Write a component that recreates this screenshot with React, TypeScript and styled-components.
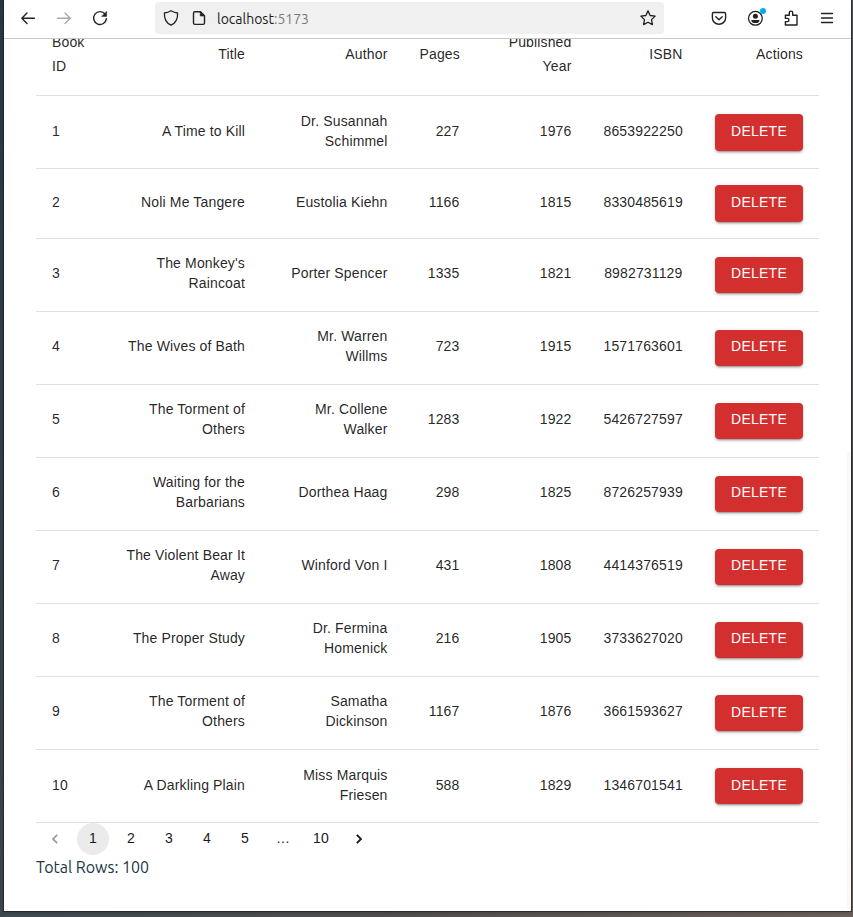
import React from "react";
import styled, { createGlobalStyle } from "styled-components";

const GlobalStyle = createGlobalStyle`
  * { box-sizing: border-box; }
  body { margin: 0; overflow: hidden; }
`;

const sans = `"Liberation Sans", Arial, sans-serif`;
const uiFont = `Ubuntu, "Noto Sans", sans-serif`;

const Desktop = styled.div`
  width: 853px;
  height: 917px;
  padding: 0 2px 6px 4px;
  background:
    linear-gradient(#55575a, #4a4a4a 60%, #6a5f59) right / 3px 100% no-repeat,
    linear-gradient(#263a42, #3b474c) left / 5px 100% no-repeat,
    linear-gradient(90deg, #3f4b50, #504e4e 45%, #6a615b);
`;

const BrowserWindow = styled.div`
  height: 911px;
  display: flex;
  flex-direction: column;
  background: #fff;
  overflow: hidden;
  box-shadow: 0 0 0 1px rgba(25, 28, 30, 0.55), 0 1px 4px rgba(0, 0, 0, 0.3);
`;

const Toolbar = styled.header`
  height: 39px;
  flex: none;
  display: flex;
  align-items: flex-start;
  padding: 2px 16px 0 16px;
  border-bottom: 1px solid #c9c9c9;
  background: #fff;
`;

const ToolbarGroup = styled.div<{ $gap: number; $push?: boolean }>`
  height: 32px;
  display: flex;
  align-items: center;
  gap: ${(p) => p.$gap}px;
  margin-left: ${(p) => (p.$push ? "auto" : "0")};
`;

const IconButton = styled.button<{ $dim?: boolean }>`
  width: 16px;
  height: 16px;
  padding: 0;
  border: 0;
  background: none;
  position: relative;
  color: ${(p) => (p.$dim ? "#a9a9a9" : "#222")};
  svg { display: block; }
`;

const Dot = styled.span`
  position: absolute;
  top: -2px;
  right: -3px;
  width: 6px;
  height: 6px;
  border-radius: 50%;
  background: #00a8ff;
`;

const AddressBar = styled.div`
  width: 509px;
  height: 32px;
  margin-left: 47px;
  padding: 0 8px;
  display: flex;
  align-items: center;
  gap: 12px;
  border-radius: 4px;
  background: #f0f0f0;
  > :last-child { margin-left: auto; }
`;

const Url = styled.span`
  font: 14px/20px ${uiFont};
  letter-spacing: 0;
  color: #1c1c1c;
  margin: 2px 0 0 -2px;
`;

const Port = styled.span`
  color: #7b7b7b;
`;

const Page = styled.main`
  flex: 1;
  min-height: 0;
  overflow: hidden;
  padding: 0 32px;
  background: linear-gradient(#f9f9f9, #f9f9f9) right bottom 2px / 4px 457px no-repeat #fff;
`;

const Table = styled.div`
  margin-top: -24px;
  width: 783px;
  font: 14px/20px ${sans};
  letter-spacing: 0.15px;
  color: rgba(0, 0, 0, 0.87);
`;

const Row = styled.div<{ $height: number; $header?: boolean }>`
  height: ${(p) => p.$height}px;
  display: grid;
  grid-template-columns: 65px 160px 142.5px 72px 112px 111px 120.5px;
  align-items: center;
  border-bottom: 1px solid #e0e0e0;
  line-height: ${(p) => (p.$header ? 24 : 20)}px;
`;

const Cell = styled.div<{ $left?: boolean; $lift: number }>`
  padding: 0 16px ${(p) => p.$lift}px;
  text-align: ${(p) => (p.$left ? "left" : "right")};
`;

const ActionCell = styled.div`
  padding: 0 16px;
  display: flex;
  justify-content: flex-end;
`;

const DeleteButton = styled.button<{ $height: number; $lift: number }>`
  width: 88px;
  height: ${(p) => p.$height}px;
  padding: 0 0 ${(p) => p.$lift}px;
  border: 0;
  border-radius: 4px;
  background: #d32f2f;
  color: #fff;
  font: 14px/24px ${sans};
  letter-spacing: 0.25px;
  box-shadow: 0 3px 1px -2px rgba(0, 0, 0, 0.2), 0 2px 2px rgba(0, 0, 0, 0.14),
    0 1px 5px rgba(0, 0, 0, 0.12);
`;

const Pagination = styled.nav`
  height: 32px;
  display: flex;
  gap: 6px;
  padding-left: 3px;
`;

const PageItem = styled.button<{ $active?: boolean; $dim?: boolean; $icon?: boolean }>`
  width: 32px;
  height: 32px;
  display: flex;
  align-items: center;
  justify-content: center;
  padding: 0 0 ${(p) => (p.$icon ? 0 : 2)}px;
  border: 0;
  border-radius: 50%;
  background: ${(p) => (p.$active ? "#ebebeb" : "transparent")};
  color: ${(p) => (p.$dim ? "#a0a0a0" : "#1a1a1a")};
  font: 14px/20px ${sans};
  letter-spacing: 0.15px;
`;

const Total = styled.div`
  font: 16px/24px ${uiFont};
  color: #213547;
`;

const books: [number, string, string, number, number, string][] = [
  [1, "A Time to Kill", "Dr. Susannah Schimmel", 227, 1976, "8653922250"],
  [2, "Noli Me Tangere", "Eustolia Kiehn", 1166, 1815, "8330485619"],
  [3, "The Monkey's Raincoat", "Porter Spencer", 1335, 1821, "8982731129"],
  [4, "The Wives of Bath", "Mr. Warren Willms", 723, 1915, "1571763601"],
  [5, "The Torment of Others", "Mr. Collene Walker", 1283, 1922, "5426727597"],
  [6, "Waiting for the Barbarians", "Dorthea Haag", 298, 1825, "8726257939"],
  [7, "The Violent Bear It Away", "Winford Von I", 431, 1808, "4414376519"],
  [8, "The Proper Study", "Dr. Fermina Homenick", 216, 1905, "3733627020"],
  [9, "The Torment of Others", "Samatha Dickinson", 1167, 1876, "3661593627"],
  [10, "A Darkling Plain", "Miss Marquis Friesen", 588, 1829, "1346701541"],
];

const columns = ["Book ID", "Title", "Author", "Pages", "Published Year", "ISBN", "Actions"];

function Icon({ children, width = 1.4 }: { children: React.ReactNode; width?: number }) {
  return (
    <svg width="16" height="16" viewBox="0 0 16 16" fill="none" stroke="currentColor"
      strokeWidth={width} strokeLinecap="round" strokeLinejoin="round">
      {children}
    </svg>
  );
}

function Chevron({ flip }: { flip?: boolean }) {
  return (
    <svg width="18" height="18" viewBox="0 0 24 24" fill="currentColor" stroke="currentColor" strokeWidth="0.7">
      <path d={flip
        ? "M10 6L8.59 7.41 13.17 12l-4.58 4.59L10 18l6-6z"
        : "M15.41 7.41L14 6l-6 6 6 6 1.41-1.41L10.83 12z"} />
    </svg>
  );
}

function BrowserToolbar() {
  return (
    <Toolbar>
      <ToolbarGroup $gap={20}>
        <IconButton aria-label="Back">
          <Icon><path d="M14.4 8.300H1.800M7 3.100 1.800 8.300 7 13.500" /></Icon>
        </IconButton>
        <IconButton $dim aria-label="Forward">
          <Icon><path d="M1.600 8.300h12.600M9 3.100 14.200 8.300 9 13.500" /></Icon>
        </IconButton>
        <IconButton aria-label="Reload">
          <Icon>
            <path d="M13.2 4.3A6.4 6.4 0 1 0 14.4 8.6" />
            <path d="M14.6 1.6v4.8H9.8z" fill="currentColor" strokeWidth=".5" />
          </Icon>
        </IconButton>
      </ToolbarGroup>
      <AddressBar>
        <IconButton aria-label="Protection">
          <Icon width={1.3}><path d="M8 .8Q11 2.700 14.600 3c.3 5.500-1.800 10-6.600 12.200C3.200 13 1.100 8.500 1.400 3Q5 2.700 8 .8z" /></Icon>
        </IconButton>
        <IconButton aria-label="Site information">
          <Icon width={1.4}>
            <path d="M9.5 1.700H4Q2.500 1.700 2.500 3.200V13Q2.500 14.400 4 14.400H12Q13.500 14.400 13.500 13V5.700z" />
            <path d="M9.300 1.700v4.200h4.200z" fill="currentColor" strokeWidth=".8" />
          </Icon>
        </IconButton>
        <Url>localhost<Port>:5173</Port></Url>
        <IconButton aria-label="Bookmark">
          <Icon width={1.3}><path d="m8 .9 2.150 4.600 5 .65-3.650 3.500.9 5L8 12.200l-4.400 2.450.9-5L.850 6.150l5-.65z" /></Icon>
        </IconButton>
      </AddressBar>
      <ToolbarGroup $gap={20} $push>
        <IconButton aria-label="Pocket">
          <Icon><path d="M2.700 2.500h10.600q1.300 0 1.300 1.300V8a6.600 6.200 0 0 1-13.200 0V3.800q0-1.300 1.300-1.300zM4.800 6.800 8 9.800l3.200-3" /></Icon>
        </IconButton>
        <IconButton aria-label="Account">
          <Icon width={1.3}>
            <circle cx="8.4" cy="8.300" r="6.900" />
            <circle cx="8.400" cy="6.200" r="2.500" fill="currentColor" stroke="none" />
            <path d="M4.200 9.900h8.400q-.5 3.200-4.200 3.200T4.200 9.900z" fill="currentColor" stroke="none" />
          </Icon>
          <Dot />
        </IconButton>
        <IconButton aria-label="Extensions">
          <Icon><path d="M2.400 15V11.600h1.900a1.600 1.600 0 0 0 0-3.200H2.400V5.200h3.900V2.800a1.700 1.700 0 0 1 3.400 0v2.400h4.300V15z" /></Icon>
        </IconButton>
        <IconButton aria-label="Menu">
          <Icon width={1.3}><path d="M2.500 3.500h11M2.500 8h11M2.500 12.500h11" /></Icon>
        </IconButton>
      </ToolbarGroup>
    </Toolbar>
  );
}

export default function App() {
  return (
    <Desktop>
      <GlobalStyle />
      <BrowserWindow>
        <BrowserToolbar />
        <Page>
          <Table>
            <Row $height={81} $header>
              {columns.map((c, i) => <Cell key={c} $left={i === 0} $lift={2}>{c}</Cell>)}
            </Row>
            {books.map(([id, title, author, pages, year, isbn]) => {
              const lift = id === 1 || id === 10 ? 2 : 4;
              return (
                <Row key={id} $height={id === 2 ? 70 : 73}>
                  <Cell $left $lift={lift}>{id}</Cell>
                  <Cell $lift={lift}>{title}</Cell>
                  <Cell $lift={lift}>{author}</Cell>
                  <Cell $lift={lift}>{pages}</Cell>
                  <Cell $lift={lift}>{year}</Cell>
                  <Cell $lift={lift}>{isbn}</Cell>
                  <ActionCell>
                    <DeleteButton $height={id === 1 ? 37 : 36.5} $lift={id > 2 && id < 9 ? 5 : 3}>
                      DELETE
                    </DeleteButton>
                  </ActionCell>
                </Row>
              );
            })}
          </Table>
          <Pagination>
            <PageItem $dim $icon aria-label="Previous page"><Chevron /></PageItem>
            <PageItem $active>1</PageItem>
            {["2", "3", "4", "5", "…", "10"].map((n) => <PageItem key={n}>{n}</PageItem>)}
            <PageItem $icon aria-label="Next page"><Chevron flip /></PageItem>
          </Pagination>
          <Total>Total Rows: 100</Total>
        </Page>
      </BrowserWindow>
    </Desktop>
  );
}
